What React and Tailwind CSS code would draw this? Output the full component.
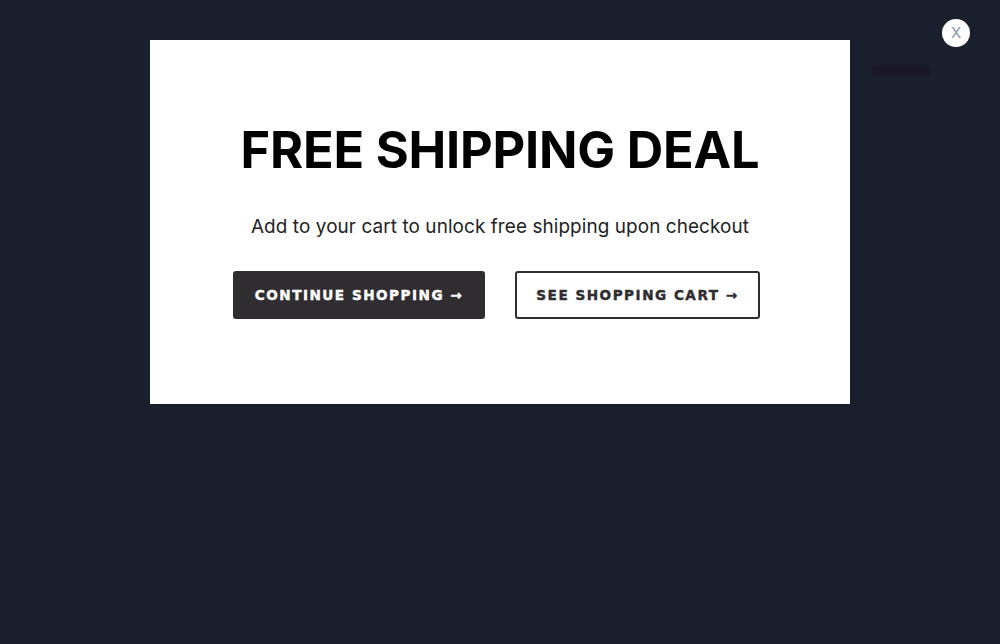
import React from 'react';

export default function App() {
  return (
    <div className="relative w-[1000px] h-[644px] overflow-hidden bg-[#1a1f2d]" style={{ fontFamily: 'Inter, "Noto Sans", sans-serif' }}>
      <div className="absolute left-[872px] top-[65px] w-[58px] h-[11px] rounded-sm bg-[#1a1728]" />

      <button className="absolute left-[942px] top-[19px] w-[28px] h-[28px] rounded-full bg-white text-[#8a93ad] text-[15px] leading-none flex items-center justify-center pb-[2px]">
        X
      </button>

      <div className="flex justify-center pt-[40px]">
        <div className="w-[700px] h-[364px] bg-white flex flex-col items-center">
          <h1 className="mt-[85px] text-[50.5px] leading-[50px] font-bold text-black tracking-[-0.2px]">
            FREE SHIPPING DEAL
          </h1>
          <p className="mt-[40px] text-[18.9px] leading-[24px] text-[#222] tracking-[0.1px]">
            Add to your cart to unlock free shipping upon checkout
          </p>
          <div className="mt-[32px] mr-[7px] flex gap-[30px]" style={{ fontFamily: '"DejaVu Sans", sans-serif' }}>
            <button className="w-[252px] h-[48px] rounded-[3px] bg-[#302d30] text-white text-[13.6px] font-bold tracking-[1.5px] [-webkit-text-stroke:0.4px_white]">
              CONTINUE SHOPPING →
            </button>
            <button className="w-[245px] h-[48px] rounded-[3px] border-2 border-[#302d30] bg-white text-[#302d30] text-[13.6px] font-bold tracking-[1.5px] [-webkit-text-stroke:0.4px_#302d30]">
              SEE SHOPPING CART →
            </button>
          </div>
        </div>
      </div>
    </div>
  );
}
